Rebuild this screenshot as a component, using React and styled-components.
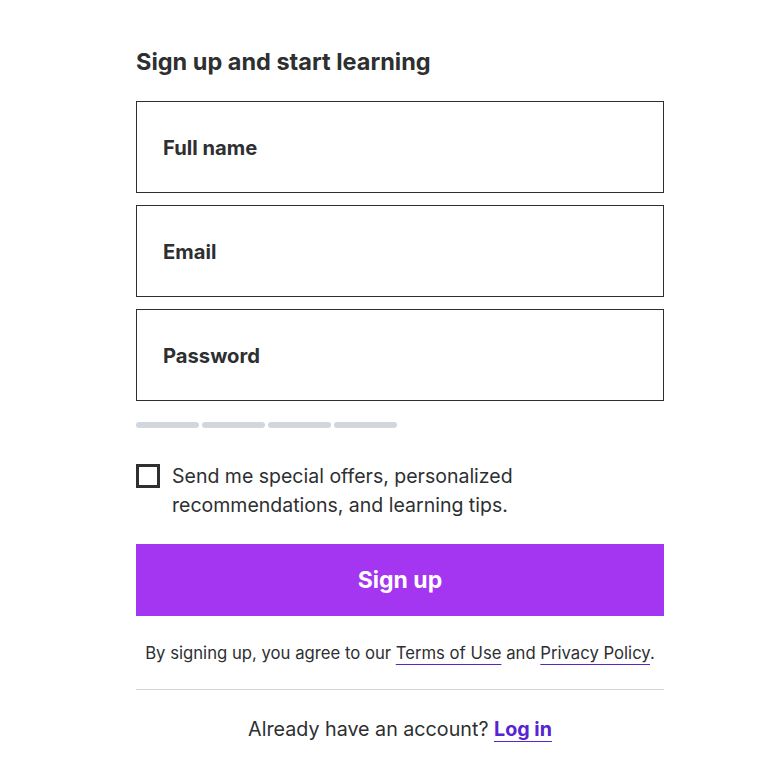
import React from "react";
import styled, { createGlobalStyle } from "styled-components";

const GlobalStyle = createGlobalStyle`
  body {
    margin: 0;
    background: #fff;
    font-family: Inter, "Liberation Sans", Arial, sans-serif;
    color: #2d2f31;
  }
`;

const App = () => {
  return (
    <Page>
      <GlobalStyle />
      <Form>
        <Title>Sign up and start learning</Title>
        <Fields>
          <Field>
            <Label>Full name</Label>
          </Field>
          <Field>
            <Label>Email</Label>
          </Field>
          <Field>
            <Label>Password</Label>
          </Field>
        </Fields>
        <Strength>
          <Bar />
          <Bar />
          <Bar />
          <Bar />
        </Strength>
        <CheckRow>
          <Box />
          <CheckText>
            Send me special offers, personalized recommendations, and learning
            tips.
          </CheckText>
        </CheckRow>
        <Button>Sign up</Button>
        <Terms>
          By signing up, you agree to our <TermLink>Terms of Use</TermLink> and{" "}
          <TermLink>Privacy Policy</TermLink>.
        </Terms>
        <Divider />
        <Login>
          Already have an account? <LoginLink>Log in</LoginLink>
        </Login>
      </Form>
    </Page>
  );
};

export default App;

const Page = styled.div`
  display: flex;
  justify-content: center;
  padding-top: 47px;
  padding-left: 17px;
`;
const Form = styled.div`
  width: 528px;
  display: flex;
  flex-direction: column;
`;
const Title = styled.h2`
  margin: 0;
  font-size: 23.5px;
  line-height: 30px;
  font-weight: 700;
`;
const Fields = styled.div`
  margin-top: 24px;
  display: flex;
  flex-direction: column;
  gap: 12px;
`;
const Field = styled.div`
  height: 92px;
  box-sizing: border-box;
  border: 1px solid #2d2f31;
  display: flex;
  align-items: center;
  padding-left: 26px;
`;
const Label = styled.span`
  font-size: 20.2px;
  font-weight: 700;
`;
const Strength = styled.div`
  margin-top: 21px;
  display: flex;
  gap: 3px;
`;
const Bar = styled.div`
  width: 63px;
  height: 6px;
  border-radius: 3px;
  background: #d1d7dc;
`;
const CheckRow = styled.div`
  margin-top: 33px;
  display: flex;
  align-items: flex-start;
  gap: 12px;
`;
const Box = styled.div`
  width: 24px;
  height: 24px;
  box-sizing: border-box;
  border: 3px solid #2d2f31;
  margin-top: 3px;
  flex-shrink: 0;
`;
const CheckText = styled.div`
  font-size: 19.5px;
  line-height: 29px;
  width: 380px;
  padding-top: 1px;
`;
const Button = styled.button`
  margin-top: 24px;
  height: 72px;
  border: none;
  background: #a435f0;
  color: #fff;
  font-family: inherit;
  font-size: 23px;
  font-weight: 700;
  cursor: pointer;
`;
const Terms = styled.div`
  margin-top: 25px;
  text-align: center;
  font-size: 16.7px;
  line-height: 24px;
`;
const TermLink = styled.a`
  color: #2d2f31;
  text-decoration: underline;
  text-decoration-color: #5624d0;
  text-underline-offset: 5px;
`;
const Divider = styled.hr`
  margin: 24px 0 0;
  border: none;
  border-top: 1px solid #d1d7dc;
`;
const Login = styled.div`
  margin-top: 26px;
  text-align: center;
  font-size: 19.7px;
  line-height: 26px;
`;
const LoginLink = styled.a`
  color: #5624d0;
  font-weight: 700;
  text-decoration: underline;
  text-decoration-color: #5624d0;
  text-underline-offset: 5px;
  text-decoration-thickness: 2px;
`;
